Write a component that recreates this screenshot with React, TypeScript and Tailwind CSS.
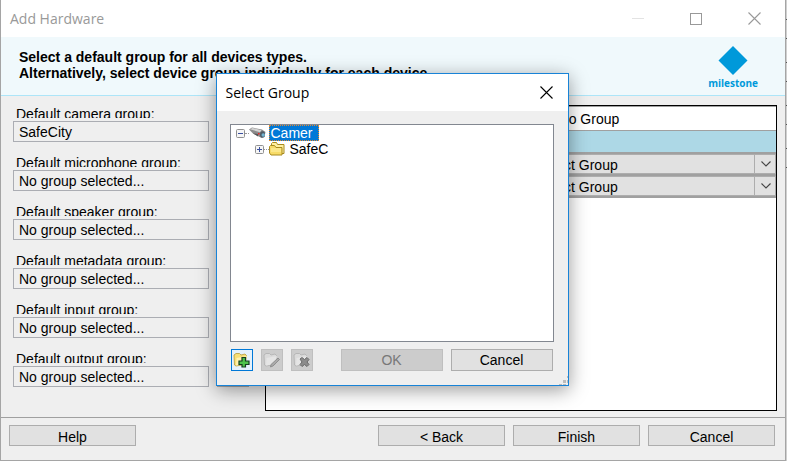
import type { ReactNode } from "react";

const groups = [
  { id: "camera", label: "Default camera group:", value: "SafeCity" },
  { id: "microphone", label: "Default microphone group:", value: "No group selected..." },
  { id: "speaker", label: "Default speaker group:", value: "No group selected..." },
  { id: "metadata", label: "Default metadata group:", value: "No group selected..." },
  { id: "input", label: "Default input group:", value: "No group selected..." },
  { id: "output", label: "Default output group:", value: "No group selected..." },
];

function GroupField({ id, label, value }: { id: string; label: string; value: string }) {
  return (
    <div className="flex flex-col gap-[3px]">
      <label htmlFor={id} className="block h-[11px] overflow-hidden pl-[3px] leading-[14px]">
        {label}
      </label>
      <div className="flex gap-2">
        <input
          id={id}
          readOnly
          defaultValue={value}
          className="h-[21px] w-[196px] border border-[#abadb3] bg-[#efefef] px-[5px] pt-[2px] outline-none"
        />
        <button aria-label={"Browse " + id} className="h-[21px] w-8 border border-[#adadad] bg-[#e1e1e1]" />
      </div>
    </div>
  );
}

function FooterButton({ children }: { children: ReactNode }) {
  return (
    <button className="h-[21px] w-[127px] overflow-hidden border border-[#adadad] bg-[#e1e1e1] pt-[3px] leading-4">
      {children}
    </button>
  );
}

function GroupSelect({ label }: { label: string }) {
  return (
    <div className="relative flex h-[22px] border-b-2 border-[#a0a0a0]">
      <select
        aria-label={label}
        className="h-5 w-full appearance-none border border-[#adadad] bg-[#e1e1e1] pt-[2px] pl-[3px] leading-4 outline-none"
      >
        <option>Select Group</option>
      </select>
      <span className="pointer-events-none absolute inset-y-0 right-0 flex w-[22px] items-center justify-center border-l border-[#adadad]">
        <svg width="10" height="6" viewBox="0 0 10 6" fill="none" stroke="#444" strokeWidth="1.1">
          <path d="M.5.5 5 5 9.500.5" />
        </svg>
      </span>
    </div>
  );
}

function CloseIcon() {
  return (
    <svg width="13" height="13" viewBox="0 0 13 13" fill="none" stroke="currentColor" strokeWidth="1.1">
      <path d="M.5.5l12 12M12.500.5l-12 12" />
    </svg>
  );
}

function Expander({ open }: { open: boolean }) {
  return (
    <svg width="9" height="9" viewBox="0 0 9 9" fill="none">
      <rect x=".5" y=".5" width="8" height="8" rx="1" fill="#f6f6f6" stroke="#919191" />
      <path d="M2 4.500h5" stroke="#3a50a0" />
      {!open && <path d="M4.500 2v5" stroke="#3a50a0" />}
    </svg>
  );
}

function CameraIcon() {
  return (
    <svg width="17" height="12" viewBox="0 0 17 12">
      <path d="M0 2.500 3 .5l10 2 3.500 2.500-1 4.500-3 1.500L4 6.500z" fill="#8b8b8b" />
      <path d="M1 2.300 3.500 1l9 2.200-1.500 2z" fill="#d2d2d2" />
      <path d="M4 6.500 9 7v2.500z" fill="#555" />
      <ellipse cx="13.500" cy="7.500" rx="2.500" ry="3.200" fill="#515c66" />
      <circle cx="14.200" cy="8" r="1.700" fill="#73b5d2" />
      <rect x="9" y="6" width="1.500" height="1.500" fill="#e22" />
    </svg>
  );
}

function FolderIcon() {
  return (
    <svg width="16" height="14" viewBox="0 0 16 14" stroke="#a88a20" strokeWidth="1">
      <path d="M2.500 9.500v-8l1-1h4l1 2h6.500v9h-3" fill="#fff0a0" />
      <path d="M.5 4.500l1-1h4l1.500 2h6v7.500H2L.5 11z" fill="#f7db67" />
      <path d="M2 7h10M2 9h10" stroke="#fff3ac" />
    </svg>
  );
}

function ToolFolder({ kind }: { kind: "add" | "edit" | "delete" }) {
  const active = kind === "add";
  return (
    <svg width="17" height="16" viewBox="0 0 17 16">
      <path
        d="M1 3l2-1.500h3.500L8 3l4-1 1.500 1.500L12 12.500 3 14l-1.500-1z"
        fill={active ? "#f8df76" : "#dadada"}
        stroke={active ? "#b49a3b" : "#b0b0b0"}
        strokeWidth=".8"
      />
      <path d="M3.500 6 14 4l-2 8-9 1.500z" fill={active ? "#fff2ae" : "#e5e5e5"} />
      {kind === "add" && (
        <path
          d="M9 5.500h3.500V9H16v3.500h-3.500V15H9v-2.500H6V9h3z"
          fill="#4ec34a"
          stroke="#153e20"
          strokeWidth="1.200"
        />
      )}
      {kind === "edit" && (
        <path d="M15 6l1.500 1.500-6.500 6.500-2.500 1 .5-2.500z" fill="#aaa" stroke="#858585" strokeWidth=".8" />
      )}
      {kind === "delete" && (
        <path
          d="M7 7l2-1.500 2.500 2L14 5.500 16 7.500 14 10l2 2.500-2 2-2.500-2-2.500 2-2-2L9 10z"
          fill="#8b8b8b"
          stroke="#6b6b6b"
        />
      )}
    </svg>
  );
}

function SelectGroupDialog() {
  return (
    <section
      role="dialog"
      aria-label="Select Group"
      className="absolute top-[73px] right-0.5 left-0 mx-auto w-[353px] border border-[#1883d7] bg-[#efefef] shadow-[0_4px_18px_rgba(0,0,0,0.4)]"
    >
      <header className="flex h-[37px] items-center justify-between bg-white pr-[15px] pl-[9px]">
        <h2 className="font-['Open_Sans',sans-serif] text-[14px]">Select Group</h2>
        <button aria-label="Close">
          <CloseIcon />
        </button>
      </header>
      <div className="pt-[13px] pr-[14px] pb-[14px] pl-[13px]">
        <ul className="h-[218px] border border-[#828790] bg-white pl-[5px]">
          <li>
            <div className="flex h-4 items-center">
              <Expander open />
              <span className="w-1 border-t border-dotted border-[#999]" />
              <CameraIcon />
              <span className="ml-[3px] h-4 border border-dotted border-[#e68a2e] bg-[#0078d7] pr-[5px] pl-px leading-[14px] text-white">
                Camer
              </span>
            </div>
            <ul className="pl-[19px]">
              <li className="flex h-4 items-center">
                <Expander open={false} />
                <span className="w-[5px] border-t border-dotted border-[#999]" />
                <FolderIcon />
                <span className="pl-[5px] leading-4">SafeC</span>
              </li>
            </ul>
          </li>
        </ul>
        <div className="mt-[7px] flex gap-2 px-px">
          <button aria-label="Add group" className="flex size-[22px] items-center justify-center border border-[#0078d7] bg-[#e5f1fb]">
            <ToolFolder kind="add" />
          </button>
          <button aria-label="Rename group" disabled className="flex size-[22px] items-center justify-center border border-[#bfbfbf] bg-[#ccc]">
            <ToolFolder kind="edit" />
          </button>
          <button aria-label="Delete group" disabled className="flex size-[22px] items-center justify-center border border-[#bfbfbf] bg-[#ccc]">
            <ToolFolder kind="delete" />
          </button>
          <button disabled className="ml-auto h-[22px] w-[102px] border border-[#bfbfbf] bg-[#ccc] leading-5 text-[#787878]">
            OK
          </button>
          <button className="h-[22px] w-[102px] border border-[#adadad] bg-[#e1e1e1] leading-5">Cancel</button>
        </div>
      </div>
      <svg className="absolute right-0 bottom-0" width="9" height="9" viewBox="0 0 9 9" fill="#bcbcbc">
        <path d="M8 0h1v2H8zM4 4h3v3H4zM8 4h1v3H8zM0 8h3v1H0zM4 8h3v1H4z" />
      </svg>
    </section>
  );
}

export default function App() {
  return (
    <div className="flex bg-[#d0d0d0] font-['Liberation_Sans',Arial,sans-serif] text-[14px] text-black">
      <main className="relative min-w-0 flex-1 border-r border-b border-l border-[#a5a5a5] bg-[#efefef]">
        <header className="flex h-[37px] items-center justify-between bg-white pr-6 pl-[9px] text-[#999]">
          <h1 className="font-['Open_Sans',sans-serif] text-[14px]">Add Hardware</h1>
          <div className="flex items-center gap-[46px]">
            <button aria-label="Minimize" className="w-3 border-t border-[#e3e3e3]" />
            <button aria-label="Maximize" className="size-3 border border-[#999]" />
            <button aria-label="Close">
              <CloseIcon />
            </button>
          </div>
        </header>

        <div className="flex h-[59px] justify-between border-b border-[#ade5f8] bg-[#f0f9fc] pr-[27px] pl-[18px]">
          <p className="pt-3 leading-4 font-bold">
            Select a default group for all devices types.
            <br />
            Alternatively, select device group individually for each device.
          </p>
          <div className="flex flex-col items-center pt-[9px]">
            <svg width="30" height="29" viewBox="0 0 30 29">
              <path d="M15 0l14.500 14.500L15 29 .5 14.500z" fill="#0099da" />
            </svg>
            <span className="font-['Open_Sans',sans-serif] text-[10px] leading-4 font-bold text-[#0099da]">
              milestone
            </span>
          </div>
        </div>

        <div className="flex gap-4 border-b border-[#a0a0a0] pr-2 pb-1.5 pl-3">
          <div className="flex flex-col gap-[14px] pt-[11px] pb-[24px]">
            {groups.map((g) => (
              <GroupField key={g.id} {...g} />
            ))}
          </div>
          <div className="mt-[9px] flex-1 border border-black bg-white">
            <table className="w-full table-fixed border-collapse">
              <thead>
                <tr className="h-6 border-t border-b border-[#a0a0a0] text-left">
                  <th scope="col" className="w-[266px] p-0 pl-1 font-normal">Hardware</th>
                  <th scope="col" className="p-0 pt-px pl-1 leading-4 font-normal">Add to Group</th>
                </tr>
              </thead>
              <tbody>
                <tr className="h-[22px] border-b-2 border-[#a0a0a0] bg-[#add8e6]">
                  <td className="p-0" />
                  <td className="p-0" />
                </tr>
                <tr>
                  <td className="p-0 pl-1">Camera 1</td>
                  <td className="p-0"><GroupSelect label="Group of camera 1" /></td>
                </tr>
                <tr>
                  <td className="p-0 pl-1">Camera 2</td>
                  <td className="p-0"><GroupSelect label="Group of camera 2" /></td>
                </tr>
              </tbody>
            </table>
          </div>
        </div>

        <footer className="flex gap-2 pt-[7px] pr-[10px] pb-[14px] pl-2">
          <FooterButton>Help</FooterButton>
          <div className="ml-auto flex gap-2">
            <FooterButton>&lt; Back</FooterButton>
            <FooterButton>Finish</FooterButton>
            <FooterButton>Cancel</FooterButton>
          </div>
        </footer>

        <SelectGroupDialog />
      </main>
      <svg width="1" height="168" viewBox="0 0 1 168" fill="#555">
        <path d="M0 19h1v1H0zM0 38h1v1H0zM0 62h1v1H0zM0 81h1v1H0zM0 105h1v1H0zM0 124h1v1H0zM0 148h1v1H0zM0 167h1v1H0z" />
      </svg>
    </div>
  );
}
